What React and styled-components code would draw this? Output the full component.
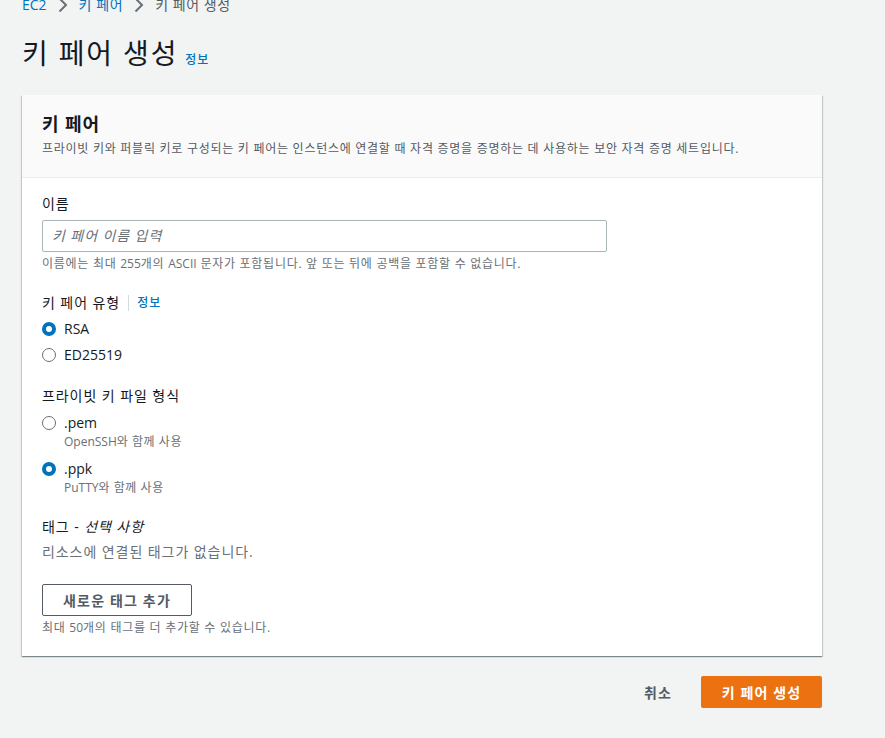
import React from 'react';
import styled, { createGlobalStyle } from 'styled-components';

const GlobalStyle = createGlobalStyle`
    html, body {
        margin: 0;
        padding: 0;
        height: 738px;
        overflow: hidden;
        background: #f2f3f3;
        font-family: "Open Sans", "Noto Sans CJK KR", sans-serif;
        color: #16191f;
    }
`;

const Page = styled.div`
    width: 800px;
    padding: 0 0 0 22px;
    letter-spacing: 0.058em;
`;

const Latin = styled.span`
    letter-spacing: 0;
`;

const Crumbs = styled.nav`
    display: flex;
    align-items: center;
    height: 14px;
    margin-top: -2px;
    gap: 11px;
    font-size: 14px;
    line-height: 14px;
    letter-spacing: 0.04em;
    color: #545b64;
`;

const Crumb = styled.a`
    color: ${p => (p.$current ? '#545b64' : '#0073bb')};
`;

const Chevron = () => (
    <svg width="10" height="14" viewBox="0 0 10 14" fill="none">
        <path d="M1.5 .5 8 7 1.5 13.5" stroke="#687078" strokeWidth="2" />
    </svg>
);

const TitleRow = styled.div`
    display: flex;
    align-items: baseline;
    gap: 7px;
    margin-top: 21px;
    height: 40px;
`;

const Title = styled.h1`
    margin: 0;
    font-size: 28px;
    line-height: 40px;
    font-weight: 400;
    letter-spacing: 1.85px;
`;

const Info = styled.a`
    color: #0073bb;
    font-size: 12px;
    font-weight: 500;
    letter-spacing: 0.08em;
`;

const Card = styled.section`
    margin-top: 22px;
    background: #fff;
    box-shadow: 0 1px 1px 0 rgba(0, 28, 36, 0.3), 1px 1px 1px 0 rgba(0, 28, 36, 0.15), -1px 1px 1px 0 rgba(0, 28, 36, 0.15);
    height: 561px;
`;

const CardHead = styled.header`
    box-sizing: border-box;
    height: 83px;
    padding: 17px 20px 0;
    background: #fafafa;
    border-bottom: 1px solid #eaeded;
`;

const CardTitle = styled.h2`
    margin: 0;
    font-size: 18px;
    line-height: 24px;
    font-weight: 700;
    letter-spacing: 0.05em;
`;

const CardDesc = styled.p`
    margin: 3px 0 0;
    font-size: 12px;
    line-height: 20px;
    letter-spacing: 0.061em;
    color: #545b64;
`;

const CardBody = styled.div`
    padding: 16px 20px 0;
`;

const Field = styled.div`
    margin-bottom: ${p => p.$gap ?? 20}px;
`;

const Label = styled.div`
    display: flex;
    align-items: center;
    font-size: 14px;
    line-height: 20px;
    margin-bottom: ${p => p.$gap ?? 6}px;
`;

const LabelInfo = styled(Info)`
    margin-left: 8px;
    padding-left: 8px;
    border-left: 1px solid #d5dbdb;
    line-height: 16px;
`;

const TextInput = styled.input`
    box-sizing: border-box;
    display: block;
    width: 565px;
    height: 32px;
    padding: 0 9px 2px;
    background: #fff;
    border: 1px solid #aab7b8;
    border-radius: 2px;
    font: inherit;
    font-size: 14px;
    letter-spacing: 0.065em;
    &::placeholder {
        color: #687078;
        font-style: italic;
        opacity: 1;
    }
`;

const Hint = styled.div`
    font-size: 12px;
    line-height: 16px;
    margin-top: 4px;
    letter-spacing: 0.06em;
    color: #687078;
`;

const Option = styled.label`
    display: grid;
    grid-template-columns: 14px 1fr;
    column-gap: 8px;
    align-items: center;
    margin-top: ${p => p.$top ?? 0}px;
    font-size: 14px;
    line-height: 20px;
`;

const Dot = styled.span`
    box-sizing: border-box;
    width: 14px;
    height: 14px;
    border-radius: 50%;
    background: #fff;
    border: ${p => (p.$on ? '4px solid #0073bb' : '1px solid #687078')};
`;

const OptionHint = styled.div`
    grid-column: 2;
    margin-top: 1px;
    font-size: 12px;
    line-height: 16px;
    letter-spacing: 0.045em;
    color: #687078;
`;

const Muted = styled.div`
    font-size: 14px;
    line-height: 20px;
    color: #687078;
`;

const OutlineButton = styled.button`
    box-sizing: border-box;
    display: block;
    width: 150px;
    height: 32px;
    margin-top: 22px;
    padding: 0;
    background: #fff;
    border: 1px solid #545b64;
    border-radius: 2px;
    color: #545b64;
    font: inherit;
    font-size: 14px;
    font-weight: 700;
    letter-spacing: 0.083em;
`;

const Actions = styled.div`
    display: flex;
    justify-content: flex-end;
    align-items: center;
    gap: 29px;
    margin-top: 20px;
`;

const CancelButton = styled.button`
    background: none;
    border: 0;
    padding: 0;
    color: #545b64;
    font: inherit;
    font-size: 14px;
    font-weight: 700;
    letter-spacing: 0.08em;
`;

const PrimaryButton = styled.button`
    box-sizing: border-box;
    width: 121px;
    height: 32px;
    padding: 0;
    background: #ec7211;
    border: 0;
    border-radius: 2px;
    color: #fff;
    font: inherit;
    font-size: 14px;
    font-weight: 700;
    letter-spacing: 0.08em;
`;

export default function App() {
    return (
        <Page>
            <GlobalStyle />
            <Crumbs>
                <Crumb><Latin>EC2</Latin></Crumb>
                <Chevron />
                <Crumb>키 페어</Crumb>
                <Chevron />
                <Crumb $current>키 페어 생성</Crumb>
            </Crumbs>
            <TitleRow>
                <Title>키 페어 생성</Title>
                <Info>정보</Info>
            </TitleRow>
            <Card>
                <CardHead>
                    <CardTitle>키 페어</CardTitle>
                    <CardDesc>프라이빗 키와 퍼블릭 키로 구성되는 키 페어는 인스턴스에 연결할 때 자격 증명을 증명하는 데 사용하는 보안 자격 증명 세트입니다.</CardDesc>
                </CardHead>
                <CardBody>
                    <Field $gap={21}>
                        <Label>이름</Label>
                        <TextInput placeholder="키 페어 이름 입력" readOnly />
                        <Hint>이름에는 최대 <Latin>255</Latin>개의 <Latin>ASCII</Latin> 문자가 포함됩니다. 앞 또는 뒤에 공백을 포함할 수 없습니다.</Hint>
                    </Field>
                    <Field $gap={21}>
                        <Label>키 페어 유형<LabelInfo>정보</LabelInfo></Label>
                        <Option><Dot $on /><Latin>RSA</Latin></Option>
                        <Option $top={6}><Dot /><Latin>ED25519</Latin></Option>
                    </Field>
                    <Field $gap={21}>
                        <Label $gap={7}>프라이빗 키 파일 형식</Label>
                        <Option><Dot /><Latin>.pem</Latin><OptionHint><Latin>OpenSSH</Latin>와 함께 사용</OptionHint></Option>
                        <Option $top={9}><Dot $on /><Latin>.ppk</Latin><OptionHint><Latin>PuTTY</Latin>와 함께 사용</OptionHint></Option>
                    </Field>
                    <Field>
                        <Label $gap={5}>태그 - <i>&nbsp;선택 사항</i></Label>
                        <Muted>리소스에 연결된 태그가 없습니다.</Muted>
                        <OutlineButton>새로운 태그 추가</OutlineButton>
                        <Hint>최대 <Latin>50</Latin>개의 태그를 더 추가할 수 있습니다.</Hint>
                    </Field>
                </CardBody>
            </Card>
            <Actions>
                <CancelButton>취소</CancelButton>
                <PrimaryButton>키 페어 생성</PrimaryButton>
            </Actions>
        </Page>
    );
}
